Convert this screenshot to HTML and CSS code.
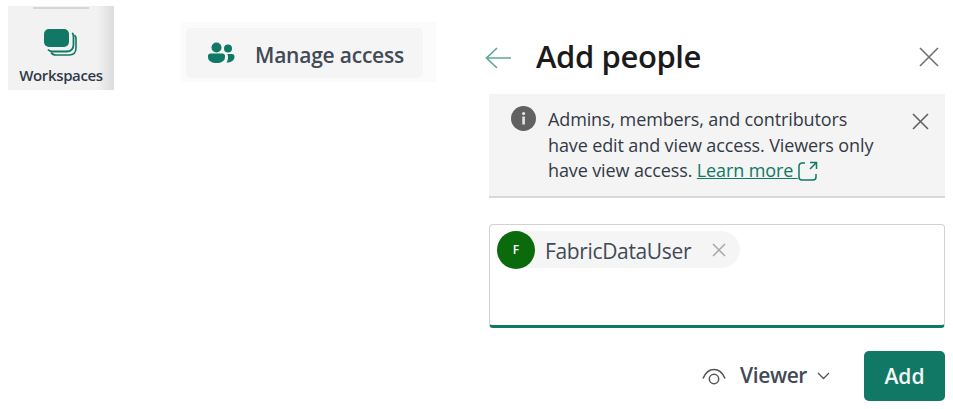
FILE: index.html
```html
<!DOCTYPE html>
<html lang="en">
<head>
<meta charset="utf-8">
<title>Add people</title>
<link rel="stylesheet" href="styles.css">
</head>
<body>
<main class="page">
  <div class="tile">
    <svg class="tile-icon" width="36" height="30" viewBox="0 0 36 30">
      <path d="M8 24.500c1 1.600 2.600 2.500 5 2.500h13c4.500 0 7-2.500 7-7v-9c0-1.600-.5-3-1.500-4" fill="none" stroke="#117865" stroke-width="1.600"/>
      <path d="M5 21.500c1 1.300 2.500 2 4.500 2h14c4.500 0 7-2.500 7-7v-8c0-1.500-.4-2.700-1.300-3.700" fill="none" stroke="#117865" stroke-width="1.800"/>
      <rect x="1" y="1" width="25" height="18" rx="5" fill="#117865"/>
    </svg>
    <span class="tile-label">Workspaces</span>
  </div>
  <div class="manage-outer">
    <div class="manage">
      <svg width="28" height="22" viewBox="0 0 28 22">
        <circle cx="9.500" cy="5.500" r="5" fill="#117865"/>
        <circle cx="21" cy="6.500" r="4" fill="#117865"/>
        <path d="M1 14c0-1.500 1-2.500 2.500-2.500h12c1.500 0 2.500 1 2.500 2.500v1c0 4-4 6-8.500 6S1 19 1 15z" fill="#117865"/>
        <path d="M19.500 20.500c1-1.500 1.500-3 1.500-5.500 0-1-.2-2-.7-3H25c1.500 0 2.500 1 2.500 2.500 0 4-3.500 6-8 6z" fill="#117865"/>
      </svg>
      <span class="manage-label">Manage access</span>
    </div>
  </div>
  <section class="panel">
    <header class="panel-head">
      <svg class="back" width="27" height="24" viewBox="0 0 27 24">
        <path d="M26 12H2M12 2 1.500 12 12 22" fill="none" stroke="#5fa898" stroke-width="1.700"/>
      </svg>
      <h1 class="title">Add people</h1>
      <svg class="close" width="20" height="20" viewBox="0 0 20 20">
        <path d="M1 1l18 18M19 1 1 19" stroke="#707070" stroke-width="1.600"/>
      </svg>
    </header>
    <div class="notice">
      <svg class="info" width="25" height="25" viewBox="0 0 25 25">
        <circle cx="12.500" cy="12.500" r="12.500" fill="#616161"/>
        <rect x="11.300" y="10.500" width="2.600" height="8" fill="#e4e4e4"/>
        <circle cx="12.600" cy="7.500" r="1.600" fill="#e4e4e4"/>
      </svg>
      <div class="notice-text">
        <span class="line">Admins, members, and contributors</span>
        <span class="line">have edit and view access. Viewers only</span>
        <span class="line"><span>have view access.</span> <a class="link" href="#">Learn more&nbsp;</a><svg class="ext" width="20" height="20" viewBox="0 0 20 20">
          <path d="M7 2H4a3 3 0 0 0-3 3v11a3 3 0 0 0 3 3h11a3 3 0 0 0 3-3v-3M12 1.500h6.500V8M18.500 1.500 12 8" fill="none" stroke="#117865" stroke-width="1.500"/>
        </svg></span>
      </div>
      <svg class="notice-close" width="17" height="17" viewBox="0 0 17 17">
        <path d="M1 1l15 15M16 1 1 16" stroke="#616161" stroke-width="1.600"/>
      </svg>
    </div>
    <div class="field">
      <div class="chip">
        <span class="avatar">F</span>
        <span class="chip-name">FabricDataUser</span>
        <svg width="14" height="14" viewBox="0 0 14 14">
          <path d="M1 1l12 12M13 1 1 13" stroke="#a8a8a8" stroke-width="1.500"/>
        </svg>
      </div>
    </div>
    <div class="actions">
      <svg class="eye" width="24" height="17" viewBox="0 0 24 17">
        <path d="M1 10.500C3.500 4.500 7.500 1.500 12 1.500s8.500 3 11 9" fill="none" stroke="#555" stroke-width="1.500"/>
        <circle cx="12" cy="11" r="4.700" fill="none" stroke="#555" stroke-width="1.500"/>
      </svg>
      <span class="role">Viewer</span>
      <svg class="chev" width="13" height="8" viewBox="0 0 13 8">
        <path d="M1 1l5.500 5.500L12 1" fill="none" stroke="#555" stroke-width="1.300"/>
      </svg>
      <button class="add" type="button">Add</button>
    </div>
  </section>
</main>
</body>
</html>
```
FILE: styles.css
```css
* { box-sizing: border-box; }
html, body { margin: 0; background: #fff; }
body { width: 953px; height: 409px; overflow: hidden; font-family: "Open Sans", "Noto Sans", sans-serif; -webkit-font-smoothing: antialiased; }
.page { display: flex; align-items: flex-start; height: 409px; padding: 6px 8px 0 8px; }

.tile { position: relative; flex: none; width: 106px; height: 84px; display: flex; flex-direction: column; align-items: center; background: linear-gradient(90deg, #f2f2f2 0, #f2f2f2 84%, #dcdcdc 100%); }
.tile::before { content: ""; position: absolute; left: 25px; top: 1px; width: 56px; height: 2px; background: #d6d6d6; }
.tile-icon { margin-top: 22px; }
.tile-label { margin-top: 7px; font-size: 15px; line-height: 20px; font-weight: 600; color: #2f3a4a; letter-spacing: -.35px; }

.manage-outer { flex: none; width: 255px; height: 60px; margin: 16px 0 0 67px; padding: 6px 13px 4px 5px; background: #fbfbfb; }
.manage { display: flex; align-items: center; height: 50px; padding-left: 21px; background: #f5f5f5; border-radius: 5px; }
.manage-label { margin: 3px 0 0 20px; font-size: 21px; font-weight: 600; color: #424a55; letter-spacing: -.22px; white-space: nowrap; }

.panel { flex: none; width: 460px; margin-left: 49px; display: flex; flex-direction: column; }
.panel-head { display: flex; align-items: center; height: 52px; margin-top: 25px; }
.back { flex: none; margin-top: 2px; }
.title { margin: -2px 0 0 24px; flex: 1; font-size: 31px; line-height: 40px; font-weight: 600; color: #1b1b1b; letter-spacing: -.4px; }
.close { flex: none; margin-right: 6px; }

.notice { display: flex; align-items: flex-start; height: 104px; margin: 11px 0 0 4px; width: 456px; padding: 12px 15px 0 22px; background: #f4f4f4; border-bottom: 2px solid #d9d9d9; }
.info { flex: none; }
.notice-text { margin: 1px 0 0 12px; width: 335px; font-size: 18px; line-height: 25.5px; color: #323a46; letter-spacing: -.12px; }
.line { display: block; white-space: nowrap; }
.link { color: #117865; }
.ext { vertical-align: -4px; }
.notice-close { flex: none; margin: 7px 0 0 29px; }

.field { width: 456px; height: 104px; margin: 26px 0 0 4px; padding: 6px 7px; background: #fff; border: 1.500px solid #d2d2d2; border-bottom: 3px solid #117865; border-radius: 4px; }
.chip { display: flex; align-items: center; width: 243px; height: 37px; background: #f5f5f5; border-radius: 19px; }
.avatar { flex: none; width: 38px; height: 38px; display: flex; align-items: center; justify-content: center; border-radius: 50%; background: #0b6a0b; color: #fff; font-size: 12px; font-weight: 600; }
.chip-name { flex: none; margin: 2px 22px 0 10px; font-size: 21px; color: #424a55; letter-spacing: -.35px; white-space: nowrap; width: 145px; }

.actions { display: flex; align-items: center; justify-content: flex-end; width: 456px; margin: 23px 0 0 4px; height: 50px; }
.eye { flex: none; }
.role { margin: 0 0 2px 14px; font-size: 21px; font-weight: 600; color: #424a55; letter-spacing: -.4px; }
.chev { margin: 0 34px 0 10px; flex: none; }
.add { width: 81px; height: 50px; padding: 0; border: 0; border-radius: 5px; background: #117865; color: #f4f8f7; font: 600 21px "Open Sans", sans-serif; letter-spacing: 0; }
```
